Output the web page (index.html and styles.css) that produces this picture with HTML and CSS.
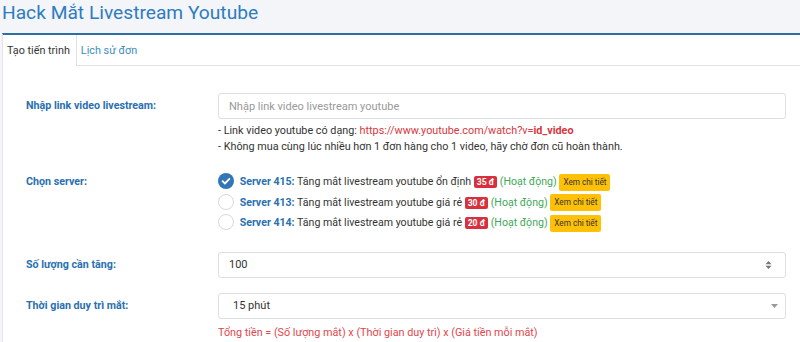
FILE: index.html
```html
<!DOCTYPE html>
<html lang="vi">
<head>
    <meta charset="UTF-8">
    <meta name="viewport" content="width=device-width, initial-scale=1.0">
    <title>Hack Mắt Livestream Youtube</title>
    <link rel="stylesheet" href="styles.css">
</head>
<body>
    <h1 class="page-title">Hack Mắt Livestream Youtube</h1>

    <div class="card">
        <!-- tabs -->
        <ul class="tabs">
            <li class="tab active">Tạo tiến trình</li>
            <li class="tab"><a href="#">Lịch sử đơn</a></li>
        </ul>

        <form class="order-form">
            <div class="form-row">
                <label class="form-label" for="link">Nhập link video livestream:</label>
                <div class="form-field">
                    <input class="input" type="text" id="link" placeholder="Nhập link video livestream youtube">
                    <div class="help">
                        <p>- Link video youtube có dạng: <span class="red">https://www.youtube.com/watch?v=<b>id_video</b></span></p>
                        <p>- Không mua cùng lúc nhiều hơn 1 đơn hàng cho 1 video, hãy chờ đơn cũ hoàn thành.</p>
                    </div>
                </div>
            </div>

            <div class="form-row server-row">
                <div class="form-label">Chọn server:</div>
                <div class="form-field servers">
                    <div class="server">
                        <span class="radio checked">
                            <svg width="16" height="16" viewBox="0 0 16 16"><circle cx="8" cy="8" r="8" fill="#3276b8"/><path d="M4.6 8.2l2.3 2.3 4.5-4.6" fill="none" stroke="#fff" stroke-width="1.8" stroke-linecap="round" stroke-linejoin="round"/></svg>
                        </span>
                        <b class="sv-name">Server 415:</b> Tăng mắt livestream youtube ổn định
                        <span class="price">35 đ</span>
                        <span class="status">(Hoạt động)</span>
                        <span class="detail">Xem chi tiết</span>
                    </div>
                    <div class="server">
                        <span class="radio"></span>
                        <b class="sv-name">Server 413:</b> Tăng mắt livestream youtube giá rẻ
                        <span class="price">30 đ</span>
                        <span class="status">(Hoạt động)</span>
                        <span class="detail">Xem chi tiết</span>
                    </div>
                    <div class="server">
                        <span class="radio"></span>
                        <b class="sv-name">Server 414:</b> Tăng mắt livestream youtube giá rẻ
                        <span class="price">20 đ</span>
                        <span class="status">(Hoạt động)</span>
                        <span class="detail">Xem chi tiết</span>
                    </div>
                </div>
            </div>

            <div class="form-row qty-row">
                <label class="form-label" for="qty">Số lượng cần tăng:</label>
                <div class="form-field">
                    <div class="input box">
                        <input type="text" id="qty" value="100">
                        <svg width="7" height="10" viewBox="0 0 7 10"><path d="M3.5 1L6.5 4.2H0.5z M3.5 9L0.5 5.8h6z" fill="#777"/></svg>
                    </div>
                </div>
            </div>

            <div class="form-row time-row">
                <label class="form-label" for="time">Thời gian duy trì mắt:</label>
                <div class="form-field">
                    <div class="input box select">
                        <select id="time">
                            <option>15 phút</option>
                            <option>30 phút</option>
                            <option>60 phút</option>
                        </select>
                        <svg width="7" height="4" viewBox="0 0 7 4"><path d="M0 0h7L3.5 4z" fill="#999"/></svg>
                    </div>
                    <p class="formula">Tổng tiền = (Số lượng mắt) x (Thời gian duy trì) x (Giá tiền mỗi mắt)</p>
                </div>
            </div>
        </form>
    </div>
</body>
</html>
```

FILE: styles.css
```css
:root {
    --blue: #2f78bb;
    --link: #3c8dbc;
    --border: #dcdfe3;
    --text: #333;
}

* {
    box-sizing: border-box;
}

body {
    margin: 0;
    background: #f3f5f8;
    font-family: Roboto, 'Liberation Sans', Arial, sans-serif;
    font-size: 11px;
    color: var(--text);
    overflow: hidden;
}

.page-title {
    margin: 0;
    padding: 1px 0 0 2px;
    height: 33px;
    font-size: 19.2px;
    font-weight: 400;
    line-height: 24px;
    color: #2e7cc0;
}

.card {
    margin-left: 2px;
    background: #fff;
    border-top: 2px solid #2b6ea8;
    border-left: 1px solid #e3e5e8;
    height: 320px;
}

/* tabs */
.tabs {
    display: flex;
    margin: 0;
    padding: 0;
    list-style: none;
    height: 31px;
    border-bottom: 1px solid #e2e2e2;
}

.tab {
    padding: 0 6px 0 4px;
    line-height: 32px;
    font-size: 10.8px;
}

.tab.active {
    background: #fff;
    border-right: 1px solid #e2e2e2;
    height: 31px;
    color: #333;
}

.tab a {
    color: var(--link);
    text-decoration: none;
}

/* form */
.order-form {
    padding: 27px 14px 0 23px;
}

.form-row {
    display: grid;
    grid-template-columns: 192px 1fr;
}

.form-label {
    font-weight: 700;
    font-size: 10.7px;
    color: #2a70b0;
    line-height: 26px;
}

.input {
    display: block;
    width: 100%;
    height: 26px;
    padding: 0 10px;
    border: 1px solid var(--border);
    border-radius: 3px;
    font-family: inherit;
    font-size: 11px;
    color: var(--text);
    background: #fff;
}

.input::placeholder {
    color: #999;
}

.help {
    margin-top: 4px;
    font-size: 10.8px;
    line-height: 16px;
}

.help p,
.formula {
    margin: 0;
}

.red {
    color: #d9363e;
}

.server-row {
    margin-top: 17px;
}

.server-row .form-label {
    line-height: 20px;
}

.server {
    height: 20.5px;
    line-height: 20.5px;
    white-space: nowrap;
    font-size: 10.6px;
}

.server > span {
    vertical-align: middle;
}

.radio {
    display: inline-block;
    width: 16px;
    height: 16px;
    margin: -2px 3px 0 0;
    border: 1px solid #d8d8d8;
    border-radius: 50%;
    background: #fff;
}

.radio.checked {
    border: none;
}

.radio svg {
    display: block;
}

.sv-name {
    color: #2a70b0;
}

.price {
    display: inline-block;
    padding: 0 3px;
    background: #d9303d;
    color: #fff;
    font-size: 8.6px;
    font-weight: 700;
    line-height: 12px;
    border-radius: 2px;
}

.status {
    color: #3fa85a;
    font-size: 10.6px;
}

.detail {
    display: inline-block;
    padding: 0 4px;
    background: #ffc107;
    color: #333;
    font-size: 8.2px;
    line-height: 17px;
    border-radius: 2px;
}

.qty-row {
    margin-top: 18px;
}

.time-row {
    margin-top: 15px;
}

.box {
    display: flex;
    align-items: center;
    justify-content: space-between;
    padding-right: 13px;
}

.box input,
.box select {
    border: none;
    outline: none;
    padding: 0;
    font-family: inherit;
    font-size: 11px;
    color: var(--text);
    background: transparent;
    flex: 1;
    appearance: none;
}

.select {
    padding-left: 14px;
    padding-right: 7px;
}

.formula {
    margin-top: 6px;
    line-height: 16px;
    color: #e0474c;
    font-size: 10.8px;
}
```
